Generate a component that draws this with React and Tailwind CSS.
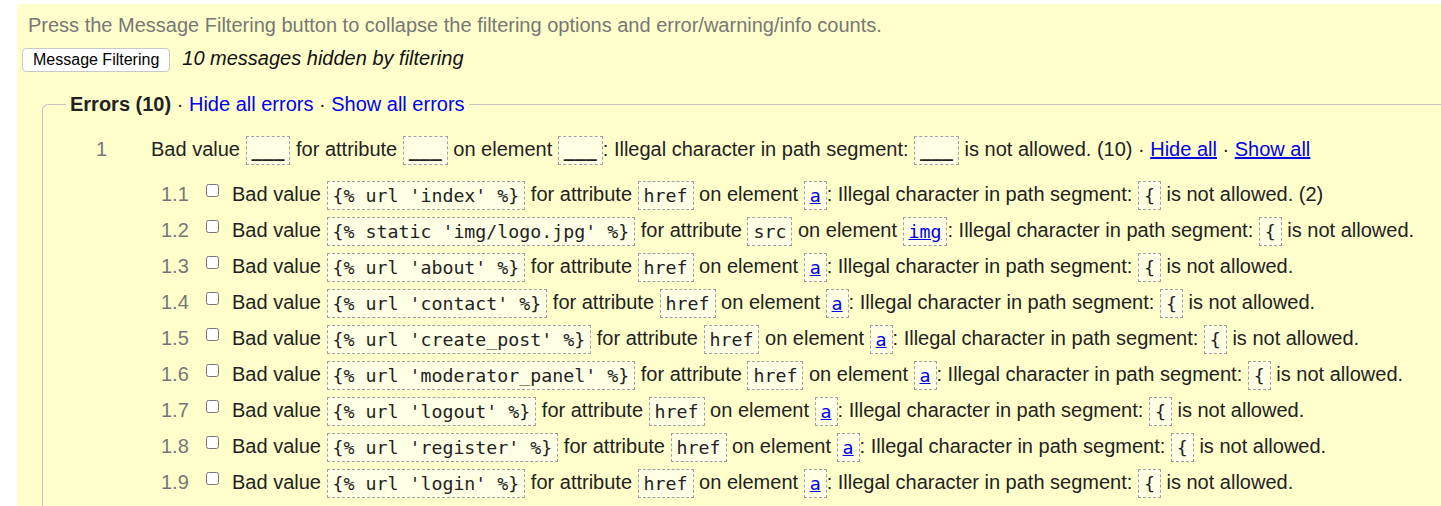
import React from 'react';

const rows = [
    { n: '1.1', val: "{% url 'index' %}", attr: 'href', el: 'a', tail: 'is not allowed. (2)' },
    { n: '1.2', val: "{% static 'img/logo.jpg' %}", attr: 'src', el: 'img', tail: 'is not allowed.' },
    { n: '1.3', val: "{% url 'about' %}", attr: 'href', el: 'a', tail: 'is not allowed.' },
    { n: '1.4', val: "{% url 'contact' %}", attr: 'href', el: 'a', tail: 'is not allowed.' },
    { n: '1.5', val: "{% url 'create_post' %}", attr: 'href', el: 'a', tail: 'is not allowed.' },
    { n: '1.6', val: "{% url 'moderator_panel' %}", attr: 'href', el: 'a', tail: 'is not allowed.' },
    { n: '1.7', val: "{% url 'logout' %}", attr: 'href', el: 'a', tail: 'is not allowed.' },
    { n: '1.8', val: "{% url 'register' %}", attr: 'href', el: 'a', tail: 'is not allowed.' },
    { n: '1.9', val: "{% url 'login' %}", attr: 'href', el: 'a', tail: 'is not allowed.' },
];

// dashed code chip used for values / attributes / elements
function Code({ children, link }) {
    return (
        <span className="inline-block align-middle h-[29px] leading-[27px] px-[5px] border border-dashed border-[#a0a0a0] bg-[#ffffe6] font-['DejaVu_Sans_Mono',monospace] text-[18.25px] text-[#222]">
            {link ? <span className="text-[#0000ee] underline">{children}</span> : children}
        </span>
    );
}

function Blank() {
    return <Code><span className="font-bold">___</span></Code>;
}

export default function App() {
    return (
        <div className="h-[506px] overflow-hidden bg-white font-['Liberation_Sans',Arial,sans-serif] text-[#222]">
            <div className="ml-[17px] mt-[4px] h-[502px] bg-[#ffffcc] pl-[5px]">
                <p className="pl-[6px] pt-[10px] text-[20px] leading-[22px] text-[#777]">
                    Press the Message Filtering button to collapse the filtering options and error/warning/info counts.
                </p>
                <div className="flex items-center gap-[12px] mt-[10px]">
                    <button className="h-[24px] px-[10px] rounded-[4px] border border-[#c8c8c8] bg-white text-[16px] leading-[20px] text-black">
                        Message Filtering
                    </button>
                    <span className="italic text-[20px] leading-[24px] text-[#111] mb-[3px]">10 messages hidden by filtering</span>
                </div>

                <fieldset className="ml-[20px] mt-[20px] border border-r-0 border-b-0 border-[#c4c4c4] rounded-tl-[6px] pb-[40px]">
                    <legend className="ml-[23px] px-[4px] text-[20px] leading-[22px]">
                        <span className="font-bold">Errors (10)</span>
                        <span> · </span>
                        <span className="text-[#0000ee]">Hide all errors</span>
                        <span> · </span>
                        <span className="text-[#0000ee]">Show all errors</span>
                    </legend>

                    <div className="pt-[16px] text-[20px]">
                        <div className="flex h-[36px] items-center pl-[53px]">
                            <span className="w-[55px] text-[#777]">1</span>
                            <div className="whitespace-nowrap leading-[36px]">
                                Bad value <Blank /> for attribute <Blank /> on element <Blank />: Illegal character in path segment: <Blank /> is not allowed. (10) · <span className="text-[#0000ee] underline">Hide all</span> · <span className="text-[#0000ee] underline">Show all</span>
                            </div>
                        </div>

                        <div className="mt-[9px] pl-[118px]">
                            {rows.map(r => (
                                <div key={r.n} className="flex h-[36px] items-center">
                                    <span className="w-[45px] text-[#777]">{r.n}</span>
                                    <input type="checkbox" className="w-[13px] h-[13px] mr-[13px] -mt-[7px]" />
                                    <div className="whitespace-nowrap leading-[36px]">
                                        Bad value <Code>{r.val}</Code> for attribute <Code>{r.attr}</Code> on element <Code link>{r.el}</Code>: Illegal character in path segment: <Code>{'{'}</Code> {r.tail}
                                    </div>
                                </div>
                            ))}
                        </div>
                    </div>
                </fieldset>
            </div>
        </div>
    );
}
